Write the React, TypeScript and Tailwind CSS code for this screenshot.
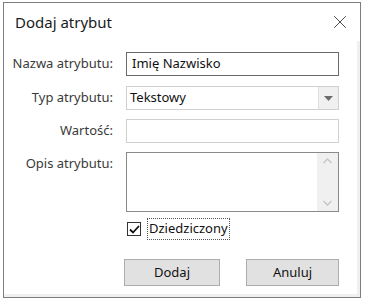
import { X } from "lucide-react";

const font = { fontFamily: '"Noto Sans", "Open Sans", sans-serif' };

const Label = ({ children, top = false }: { children: string; top?: boolean }) => (
  <div
    className={`w-[109px] shrink-0 text-right text-[13px] text-[#3a3a3a] ${top ? "self-start pt-[2px]" : ""}`}
  >
    {children}
  </div>
);

const App = () => {
  return (
    <div className="w-[365px] h-[299px] bg-white pt-[2px] pl-[3px]" style={font}>
      <div className="w-[358px] h-[296px] border border-[#7e7e7e] flex flex-col bg-white">
        {/* title bar */}
        <div className="h-[38px] shrink-0 flex items-center justify-between pl-[11px] pr-[9px]">
          <span className="text-[15px] text-[#1b1b1b]">Dodaj atrybut</span>
          <X size={22} strokeWidth={0.9} className="text-[#222]" />
        </div>

        {/* client area */}
        <div className="flex-1 flex bg-[#f0f0f0] pr-[3px] pb-[3px]">
          <div className="flex-1 bg-white flex flex-col pt-[11px]">
            <div className="flex items-center gap-[13px]">
              <Label>Nazwa atrybutu:</Label>
              <div className="w-[213px] h-[24px] border border-[#6a6a6a] flex items-center px-[5px] text-[13px] text-[#111]">
                Imię Nazwisko
              </div>
            </div>

            <div className="flex items-center gap-[13px] mt-[10px]">
              <Label>Typ atrybutu:</Label>
              <div className="w-[213px] h-[24px] border border-[#d0d0d0] flex items-center text-[13px] text-[#111]">
                <span className="flex-1 px-[3px]">Tekstowy</span>
                <div className="w-[20px] h-full bg-[#f0f0f0] border-l border-[#e0e0e0] flex items-center justify-center">
                  <svg width="9" height="5" viewBox="0 0 9 5">
                    <path d="M0 0 H9 L4.5 5 Z" fill="#6b6b6b" />
                  </svg>
                </div>
              </div>
            </div>

            <div className="flex items-center gap-[13px] mt-[9px]">
              <Label>Wartość:</Label>
              <div className="w-[213px] h-[24px] border border-[#d0d0d0]" />
            </div>

            <div className="flex items-start gap-[13px] mt-[9px]">
              <Label top>Opis atrybutu:</Label>
              <div className="w-[213px] h-[60px] border border-[#8a8a8a] flex justify-end">
                <div className="w-[21px] h-full bg-[#f0f0f0] flex flex-col items-center justify-between py-[5px]">
                  <svg width="9" height="6" viewBox="0 0 9 6">
                    <path d="M0.5 5 L4.5 1 L8.5 5" stroke="#c4c4c4" strokeWidth="1.3" fill="none" />
                  </svg>
                  <svg width="9" height="6" viewBox="0 0 9 6">
                    <path d="M0.5 1 L4.5 5 L8.5 1" stroke="#c4c4c4" strokeWidth="1.3" fill="none" />
                  </svg>
                </div>
              </div>
            </div>

            <div className="flex items-center mt-[6px] pl-[123px]">
              <div className="w-[14px] h-[14px] border border-[#333] bg-white flex items-center justify-center">
                <svg width="11" height="9" viewBox="0 0 11 9">
                  <path d="M1 4.5 L4 7.5 L10 1" stroke="#111" strokeWidth="1.8" fill="none" />
                </svg>
              </div>
              <div className="ml-[6px] h-[22px] px-[1px] border border-dotted border-[#555] flex items-center text-[13px] text-[#111]">
                Dziedziczony
              </div>
            </div>

            <div className="flex mt-[19px] pl-[120px] gap-[26px]">
              <button className="w-[96px] h-[27px] bg-[#e1e1e1] border border-[#adadad] text-[13px] text-[#111]">
                Dodaj
              </button>
              <button className="w-[93px] h-[27px] bg-[#e1e1e1] border border-[#adadad] text-[13px] text-[#111]">
                Anuluj
              </button>
            </div>
          </div>
        </div>
      </div>
    </div>
  );
};

export default App;
